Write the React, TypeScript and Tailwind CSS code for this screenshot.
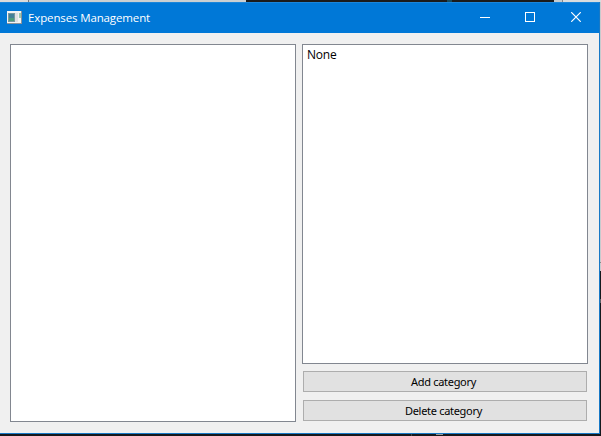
import React from "react";

function TitleBar() {
  return (
    <header className="flex h-[31px] shrink-0 items-center border-t border-[#1a86db] bg-[#0078d7] pl-[7px] text-white">
      <svg width="15" height="13" viewBox="0 0 15 13" className="mb-px shrink-0" shapeRendering="crispEdges">
        <rect width="15" height="13" fill="#8b9299" />
        <rect width="14" height="12" fill="#f2f3f3" />
        <rect x="1" y="2" width="7" height="9" fill="#7898a0" />
        <rect x="2" y="3" width="5" height="4" fill="#438098" />
        <rect x="2" y="7" width="5" height="3" fill="#4b9c7c" />
        <rect x="8" y="2" width="3" height="9" fill="#dfe1e3" />
        <rect x="12" y="2" width="2" height="5" fill="#9bc9ae" />
      </svg>
      <h1 className="ml-[6px] flex-1 whitespace-nowrap font-['Open_Sans','Noto_Sans',sans-serif] text-[11.5px] leading-[16px] tracking-[-0.13px]">
        Expenses Management
      </h1>
      <div className="flex h-full items-center">
        <button aria-label="Minimize" className="flex w-[45px] items-center justify-start pl-[17px]">
          <svg width="10" height="10" shapeRendering="crispEdges">
            <path d="M0 4.5H10" stroke="white" />
          </svg>
        </button>
        <button aria-label="Maximize" className="mb-[2px] flex w-[45px] items-center justify-start pl-[17px]">
          <svg width="10" height="10" shapeRendering="crispEdges">
            <rect x=".5" y=".5" width="9" height="9" fill="none" stroke="white" />
          </svg>
        </button>
        <button aria-label="Close" className="mb-[2px] flex w-[46px] items-center justify-center">
          <svg width="10" height="10">
            <path d="M.2 .2L9.8 9.8M9.8 .2L.2 9.8" stroke="white" strokeWidth="1.2" />
          </svg>
        </button>
      </div>
    </header>
  );
}

function CategoryButton({ children }: { children: React.ReactNode }) {
  return (
    <button className="flex h-[21px] shrink-0 items-center justify-center border border-[#adadad] bg-[#e1e1e1] pr-[3px] font-['Noto_Sans',sans-serif] text-[11px] leading-[15px] tracking-[-0.3px] text-black">
      {children}
    </button>
  );
}

export default function App() {
  return (
    <div className="flex h-[436px] w-[601px] flex-col overflow-hidden">
      <div className="flex h-[2px] shrink-0">
        <div className="w-[28px] bg-[#dadada]" />
        <div className="w-px bg-[#777777]" />
        <div className="w-[217px] bg-[#cbcfd1]" />
        <div className="w-[201px] bg-[#1b1b1b]" />
        <div className="w-[5px] bg-[#174a5c]" />
        <div className="w-[102px] bg-[#1b1b1b]" />
        <div className="w-[8px] bg-[#c4ccd1]" />
        <div className="w-px bg-[#888888]" />
        <div className="flex-1 bg-[#d9dcde]" />
      </div>
      <div className="flex h-[432px] shrink-0">
        <div className="flex w-[600px] flex-col border-r border-b border-[#1879c6] bg-[#f0f0f0]">
          <TitleBar />
          <main className="flex flex-1 gap-[6px] pt-[11px] pr-[11px] pb-[11px] pl-[10px]">
            <section className="w-[286px] border border-[#828790] bg-white" />
            <section className="flex w-[286px] flex-col">
              <div className="h-[320px] shrink-0 border border-[#828790] bg-white pl-[4px] pt-[2px] font-['Open_Sans','Noto_Sans',sans-serif] text-[12px] leading-[16px] tracking-[-0.2px] text-black">
                None
              </div>
              <div className="mt-[7px] flex flex-col gap-[8px] px-px">
                <CategoryButton>Add category</CategoryButton>
                <CategoryButton>Delete category</CategoryButton>
              </div>
            </section>
          </main>
        </div>
        <div className="flex w-px flex-col">
          <div className="h-[260px] bg-[#c7cbce]" />
          <div className="h-px bg-[#888888]" />
          <div className="h-[8px] bg-[#c7cbce]" />
          <div className="h-[28px] bg-[#15191d]" />
          <div className="h-[4px] bg-[#5b6268]" />
          <div className="flex-1 bg-[#15191d]" />
        </div>
      </div>
      <div className="flex h-[2px] shrink-0 bg-[#17181b]">
        <div className="ml-[411px] w-px bg-[#444444]" />
        <div className="ml-[24px] h-px w-[7px] bg-[#999999]" />
      </div>
    </div>
  );
}
